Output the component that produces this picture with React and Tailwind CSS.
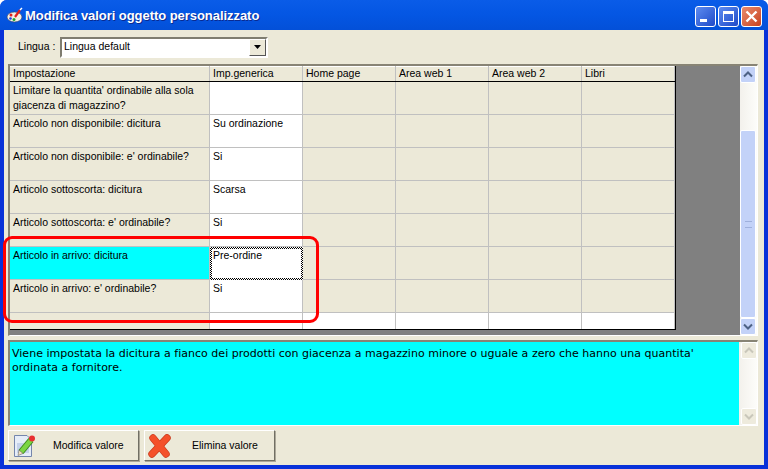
const cols = ["w-[200px]", "w-[93px]", "w-[93px]", "w-[93px]", "w-[93px]", "w-[93px]"];
const rows = [
  { a: "Limitare la quantita' ordinabile alla sola giacenza di magazzino?", b: "" },
  { a: "Articolo non disponibile: dicitura", b: "Su ordinazione" },
  { a: "Articolo non disponibile: e' ordinabile?", b: "Si" },
  { a: "Articolo sottoscorta: dicitura", b: "Scarsa" },
  { a: "Articolo sottoscorta: e' ordinabile?", b: "Si" },
  { a: "Articolo in arrivo: dicitura", b: "Pre-ordine", sel: true },
  { a: "Articolo in arrivo: e' ordinabile?", b: "Si" },
];

function ScrollBtn({ up, faded }) {
  return (
    <div className={`w-[16px] h-[17px] shrink-0 rounded-[2px] border border-white flex items-center justify-center ${faded ? "bg-[#eeebdd] w-[15px] ml-[2px]" : "bg-[#c3d2f8]"}`}>
      <svg width="10" height="7" viewBox="0 0 10 7">
        <path d={up ? "M1 5.5 L5 1.5 L9 5.5" : "M1 1.5 L5 5.5 L9 1.5"} fill="none" stroke={faded ? "#c9c7ba" : "#4d6185"} strokeWidth="2" />
      </svg>
    </div>
  );
}

function WinBtn({ children, red }) {
  return (
    <div className={`w-[21px] h-[21px] rounded-[3px] border border-white flex items-center justify-center ${red ? "bg-gradient-to-br from-[#e88a6c] to-[#c8401c]" : "bg-gradient-to-br from-[#5f8cf0] to-[#1f48c8]"}`}>
      {children}
    </div>
  );
}

export default function App() {
  return (
    <div className="w-[768px] h-[469px] relative overflow-hidden flex flex-col bg-[#0831d9] rounded-t-[7px] font-['Liberation_Sans',sans-serif] text-[10.5px] text-black">
      {/* title bar */}
      <div className="h-[30px] shrink-0 flex items-center pl-[6px] pr-[6px] pt-[2px] bg-gradient-to-b from-[#0a5ce8] via-[#0456e3] to-[#0350d8]">
        <svg width="18" height="18" viewBox="0 0 18 18" className="shrink-0">
          <ellipse cx="8.5" cy="10" rx="7.5" ry="5" fill="#f4f0e4" stroke="#3a4a70" strokeWidth="0.7" />
          <circle cx="5" cy="8" r="1.5" fill="#e02020" />
          <circle cx="8" cy="12.5" r="1.5" fill="#20a030" />
          <circle cx="4.5" cy="11.5" r="1.3" fill="#2040e0" />
          <path d="M9 10 L14 3" stroke="#e02020" strokeWidth="2.2" />
          <path d="M14 3 L16 1" stroke="#ffffff" strokeWidth="1.5" />
        </svg>
        <span className="ml-[1px] text-white font-bold text-[13px] tracking-[-0.05px] [text-shadow:1px_1px_0_#0a2a90]">Modifica valori oggetto personalizzato</span>
        <div className="ml-auto flex gap-[2px]">
          <WinBtn><div className="w-[7px] h-[3px] bg-white mt-[9px] mr-[5px]" /></WinBtn>
          <WinBtn><div className="w-[11px] h-[11px] border border-white border-t-[3px]" /></WinBtn>
          <WinBtn red>
            <svg width="13" height="13" viewBox="0 0 13 13"><path d="M1.5 1.5 L11.5 11.5 M11.5 1.5 L1.5 11.5" stroke="#fff" strokeWidth="2.4" /></svg>
          </WinBtn>
        </div>
      </div>

      {/* client */}
      <div className="mx-[4px] flex-1 min-h-0 bg-[#ece9d8] flex flex-col">
        {/* language row */}
        <div className="h-[34px] shrink-0 flex items-center pl-[14px] pb-[1px] pt-[1px]">
          <span className="w-[42px]">Lingua :</span>
          <div className="w-[208px] h-[21px] border-2 border-t-[#7f7d70] border-l-[#7f7d70] border-r-white border-b-white bg-white flex items-center pl-[2px]">
            <span className="flex-1">Lingua default</span>
            <div className="w-[17px] h-[17px] bg-[#ece9d8] border border-t-white border-l-white border-r-[#555] border-b-[#555] flex items-center justify-center">
              <svg width="7" height="4" viewBox="0 0 7 4"><path d="M0 0 H7 L3.5 4 Z" fill="#000" /></svg>
            </div>
          </div>
        </div>

        {/* grid + scrollbar */}
        <div className="ml-[4px] mr-[6px] h-[272px] shrink-0 border-t-2 border-l-2 border-t-[#888475] border-l-[#888475] border-r border-b border-r-white border-b-white bg-[#808080] flex overflow-hidden">
          <div className="w-[666px] h-[264px] shrink-0 border-r border-b border-black bg-white flex flex-col">
            <div className="h-[16px] shrink-0 flex bg-[#ece9d8] border-b border-black">
              {["Impostazione", "Imp.generica", "Home page", "Area web 1", "Area web 2", "Libri"].map((t, i) => (
                <div key={t} className={`${cols[i]} pl-[3px] leading-[15px] border-r border-[#c0c0c0] shadow-[inset_0_1px_0_#fff]`}>{t}</div>
              ))}
            </div>
            {rows.map((r, i) => (
              <div key={i} className="flex h-[33px] shrink-0">
                <div className={`${cols[0]} pl-[3px] pt-[1px] leading-[15px] border-r border-b border-[#c0c0c0] ${r.sel ? "bg-[#00ffff]" : "bg-[#ece9d8]"}`}>{r.a}</div>
                {r.sel ? (
                  <div className={`${cols[1]} p-[2px] bg-[repeating-conic-gradient(#000_0_25%,#fff_0_50%)] bg-[size:2px_2px]`}>
                    <div className="w-full h-full bg-white pl-[1px] leading-[13px]">{r.b}</div>
                  </div>
                ) : (
                  <div className={`${cols[1]} pl-[3px] pt-[1px] leading-[15px] border-r border-b border-[#c0c0c0] bg-white`}>{r.b}</div>
                )}
                {[2, 3, 4, 5].map((c) => (
                  <div key={c} className={`${cols[c]} border-r border-b border-[#c0c0c0] bg-[#ece9d8]`} />
                ))}
              </div>
            ))}
            <div className="flex flex-1 min-h-0">
              <div className={`${cols[0]} border-r border-[#c0c0c0] bg-[#ece9d8]`} />
              {[1, 2, 3, 4, 5].map((c) => (
                <div key={c} className={`${cols[c]} border-r border-[#c0c0c0] bg-white`} />
              ))}
            </div>
          </div>
          <div className="flex-1" />
          <div className="w-[17px] shrink-0 h-full bg-gradient-to-r from-[#f3f1ec] to-[#fdfdfa] flex flex-col">
            <ScrollBtn up />
            <div className="h-[47px] shrink-0" />
            <div className="flex-1 min-h-0 w-[16px] rounded-[2px] border border-white bg-[#c3d2f8] flex items-center justify-center">
              <div className="w-[7px] h-[7px] border-t border-b border-[#9fb0dc]" />
            </div>
            <ScrollBtn />
          </div>
        </div>

        {/* description */}
        <div className="ml-[4px] mr-[6px] mt-[4px] h-[86px] shrink-0 border-t-2 border-l-2 border-t-[#888475] border-l-[#888475] border-r border-b border-r-white border-b-white bg-[#00ffff] flex">
          <div className="flex-1 pl-[2px] pt-[5px] leading-[14px] tracking-[0.015px] font-['DejaVu_Sans',sans-serif] text-[11px] pr-[5px]">
            Viene impostata la dicitura a fianco dei prodotti con giacenza a magazzino minore o uguale a zero che hanno una quantita' ordinata a fornitore.
          </div>
          <div className="w-[18px] shrink-0 bg-gradient-to-r from-[#f3f1ec] to-[#fdfdfa] flex flex-col justify-between">
            <ScrollBtn up faded />
            <ScrollBtn faded />
          </div>
        </div>

        {/* buttons */}
        <div className="mt-[4px] ml-[4px] flex gap-[5px]">
          <div className="w-[131px] h-[31px] border border-t-white border-l-white border-r-[#716f64] border-b-[#716f64] shadow-[1px_1px_0_#aca899] flex items-center pl-[5px]">
            <svg width="22" height="24" viewBox="0 0 22 24" className="shrink-0">
              <path d="M0.5 1.5 H13 L17.5 6 V22.5 H0.5 Z" fill="#e6edf8" stroke="#7486ac" />
              <rect x="3" y="9" width="12" height="10" fill="#c4d2ea" />
              <path d="M7 18 L17 6" stroke="#3f8a20" strokeWidth="6.4" />
              <path d="M7 18 L17 6" stroke="#7cd644" strokeWidth="4.4" />
              <path d="M4 21.5 L5 16 L9 19.5 Z" fill="#f0e0c0" stroke="#555" strokeWidth="0.5" />
              <circle cx="18" cy="4.5" r="3" fill="#e83030" />
            </svg>
            <span className="ml-[17px]">Modifica valore</span>
          </div>
          <div className="w-[131px] h-[31px] border border-t-white border-l-white border-r-[#716f64] border-b-[#716f64] shadow-[1px_1px_0_#aca899] flex items-center pl-[3px]">
            <svg width="23" height="24" viewBox="0 0 23 24" className="shrink-0">
              <path d="M5 4 L18 20 M19 4 L4 20" stroke="#c8381a" strokeWidth="7.4" strokeLinecap="round" />
              <path d="M5 4 L18 20 M19 4 L4 20" stroke="#f4502a" strokeWidth="6" strokeLinecap="round" />
            </svg>
            <span className="ml-[21px]">Elimina valore</span>
          </div>
        </div>
      </div>
      <div className="h-[4px] shrink-0" />

      {/* red annotation */}
      <div className="absolute left-[3px] top-[236px] w-[316px] h-[87px] border-[3px] border-[#f00] rounded-[9px] pointer-events-none" />
    </div>
  );
}
